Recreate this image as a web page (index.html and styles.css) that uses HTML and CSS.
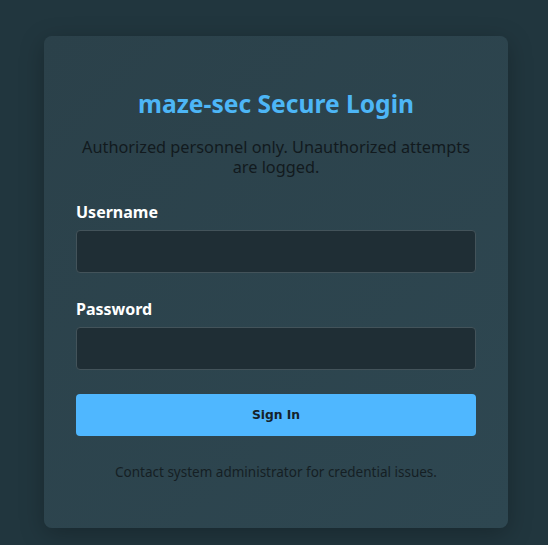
FILE: index.html
```html
<!DOCTYPE html>
<html lang="en">
<head>
<meta charset="utf-8">
<title>maze-sec Secure Login</title>
<link rel="stylesheet" href="styles.css">
</head>
<body>
<main class="page">
  <section class="card">
    <h1 class="title">maze-sec Secure Login</h1>
    <p class="subtitle">Authorized personnel only. Unauthorized attempts are logged.</p>
    <form class="form">
      <div class="field">
        <label class="label" for="username">Username</label>
        <input class="input" id="username" type="text">
      </div>
      <div class="field">
        <label class="label" for="password">Password</label>
        <input class="input" id="password" type="password">
      </div>
      <button class="button" type="button">Sign In</button>
    </form>
    <p class="footer">Contact system administrator for credential issues.</p>
  </section>
</main>
</body>
</html>
```

FILE: styles.css
```css
* { box-sizing: border-box; }
html, body { margin: 0; padding: 0; }
body {
  background: #21363e;
  font-family: "Noto Sans", "Open Sans", sans-serif;
  height: 545px;
  overflow: hidden;
}
.page {
  padding: 36px 40px 0 44px;
}
.card {
  width: 464px;
  height: 492px;
  border-radius: 8px;
  background: linear-gradient(135deg, #2b414a 0%, #2e4751 100%);
  box-shadow: 0 6px 24px rgba(0, 0, 0, 0.25);
  padding: 52px 32px 0;
  display: flex;
  flex-direction: column;
}
.title {
  margin: 0;
  font-size: 24.6px;
  line-height: 32px;
  font-weight: 700;
  color: #4db6f6;
  text-align: center;
}
.subtitle {
  margin: 17px 0 0;
  font-size: 16.3px;
  line-height: 20px;
  color: #121a1e;
  text-align: center;
}
.form {
  margin-top: 25px;
  display: flex;
  flex-direction: column;
}
.field {
  display: flex;
  flex-direction: column;
  gap: 8px;
  margin-bottom: 26px;
}
.field + .field { margin-bottom: 24px; }
.label {
  font-size: 16px;
  line-height: 20px;
  font-weight: 700;
  color: #ffffff;
}
.input {
  height: 43px;
  width: 100%;
  background: #1f2e35;
  border: 1px solid #43535a;
  border-radius: 4px;
  color: #fff;
  font-size: 15px;
  padding: 0 12px;
}
.button {
  height: 42px;
  width: 100%;
  background: #4fb7ff;
  border: none;
  border-radius: 4px;
  color: #15222a;
  font-family: "DejaVu Sans", sans-serif;
  font-weight: 700;
  font-size: 12.3px;
}
.footer {
  margin: 27px 0 0;
  font-size: 13.5px;
  line-height: 18px;
  color: #151f24;
  text-align: center;
}
```
